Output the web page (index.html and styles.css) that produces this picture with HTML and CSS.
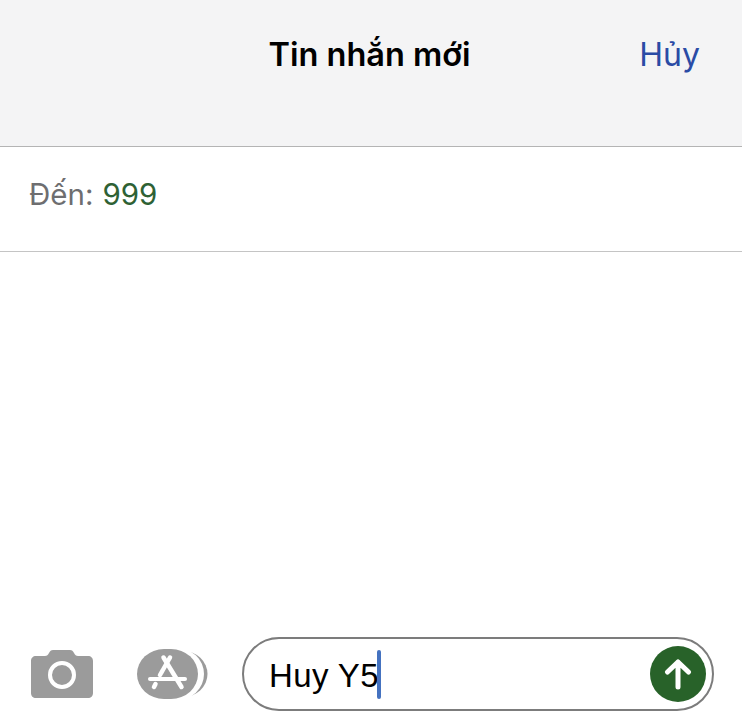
FILE: index.html
```html
<!DOCTYPE html>
<html lang="vi">
<head>
    <meta charset="UTF-8">
    <meta name="viewport" content="width=device-width, initial-scale=1.0">
    <title>Tin nhắn mới</title>
    <link rel="stylesheet" href="styles.css">
</head>
<body>
    <div class="screen">
        <header class="nav">
            <h1 class="nav-title">Tin nhắn mới</h1>
            <span class="nav-cancel">Hủy</span>
        </header>

        <div class="to-row">
            <span class="to-label">Đến:</span>
            <span class="to-value">999</span>
        </div>

        <div class="thread"></div>

        <div class="composer">
            <svg class="icon-camera" width="62" height="48" viewBox="0 0 62 48">
                <path fill="#9b9b9b" d="M5 6h9c2 0 3-1 4-3 1-2 2-3 4-3h17c2 0 3 1 4 3 1 2 2 3 4 3h10c3 0 5 2 5 5v32c0 3-2 5-5 5H5c-3 0-5-2-5-5V11c0-3 2-5 5-5z"/>
                <circle cx="31" cy="25" r="12" fill="none" stroke="#fff" stroke-width="4"/>
            </svg>

            <svg class="icon-apps" width="71" height="50" viewBox="0 0 71 50">
                <ellipse cx="46" cy="25" rx="24.500" ry="23" fill="#9b9b9b"/>
                <rect x="6" y="-1" width="61" height="52" rx="27" ry="26" fill="#fff"/>
                <rect x="0" y="0" width="61" height="50" rx="27" ry="25" fill="#9b9b9b"/>
                <g fill="none" stroke="#fff" stroke-linecap="round">
                    <path stroke-width="4.500" d="M26.500 8.500L44.500 38"/>
                    <path stroke-width="4.500" d="M33 8.500L23 26"/>
                    <path stroke-width="4" d="M13 30h35"/>
                    <path stroke-width="4.500" d="M18.500 35l-1.500 3"/>
                </g>
            </svg>

            <div class="input-pill">
                <span class="input-text">Huy Y5</span><span class="caret"></span>
                <button class="send-btn" type="button">
                    <svg width="28" height="32" viewBox="0 0 28 32">
                        <path fill="none" stroke="#fff" stroke-width="5" stroke-linecap="round" stroke-linejoin="round" d="M14 29V4M3.500 14L14 4l10.500 10"/>
                    </svg>
                </button>
            </div>
        </div>
    </div>
</body>
</html>
```

FILE: styles.css
```css
html, body {
    margin: 0;
    padding: 0;
    background-color: #ffffff;
}
.screen {
    width: 742px;
    height: 720px;
    display: flex;
    flex-direction: column;
    overflow: hidden;
    font-family: Inter, "Liberation Sans", sans-serif;
}
.nav {
    height: 147px;
    flex-shrink: 0;
    box-sizing: border-box;
    background-color: #f4f4f5;
    border-bottom: 1px solid #b4b4b4;
    position: relative;
    padding: 35px 3px 0 0;
    text-align: center;
}
.nav-title {
    margin: 0;
    font-size: 32.500px;
    line-height: 40px;
    font-weight: 600;
    color: #000000;
}
.nav-cancel {
    position: absolute;
    right: 42px;
    top: 35px;
    font-size: 32px;
    line-height: 40px;
    color: #2a4ba5;
}
.to-row {
    height: 105px;
    flex-shrink: 0;
    box-sizing: border-box;
    border-bottom: 1px solid #c4c4c4;
    padding: 27px 0 0 29px;
    display: flex;
    gap: 9px;
    font-size: 29.500px;
    line-height: 40px;
}
.to-label {
    color: #6e6e70;
}
.to-value {
    color: #2e6134;
}
.thread {
    flex: 1;
}
.composer {
    height: 83px;
    flex-shrink: 0;
    box-sizing: border-box;
    padding: 0 28px 9px 31px;
    display: flex;
    align-items: center;
}
.icon-camera {
    flex-shrink: 0;
    margin-right: 44px;
}
.icon-apps {
    flex-shrink: 0;
    margin-right: 34px;
}
.input-pill {
    flex: 1;
    height: 74px;
    box-sizing: border-box;
    border: 2px solid #7c7c7c;
    border-radius: 37px;
    display: flex;
    align-items: center;
    padding: 0 6px 0 25px;
}
.input-text {
    padding-top: 3px;
    font-family: "Liberation Sans", sans-serif;
    font-size: 33px;
    letter-spacing: 0.400px;
    color: #000000;
}
.caret {
    width: 4px;
    height: 49px;
    margin-left: -2px;
    border-radius: 2px;
    background-color: #4472c0;
}
.send-btn {
    margin-left: auto;
    width: 56px;
    height: 56px;
    padding: 0;
    border: none;
    border-radius: 50%;
    background-color: #286229;
    display: flex;
    align-items: center;
    justify-content: center;
}
```
